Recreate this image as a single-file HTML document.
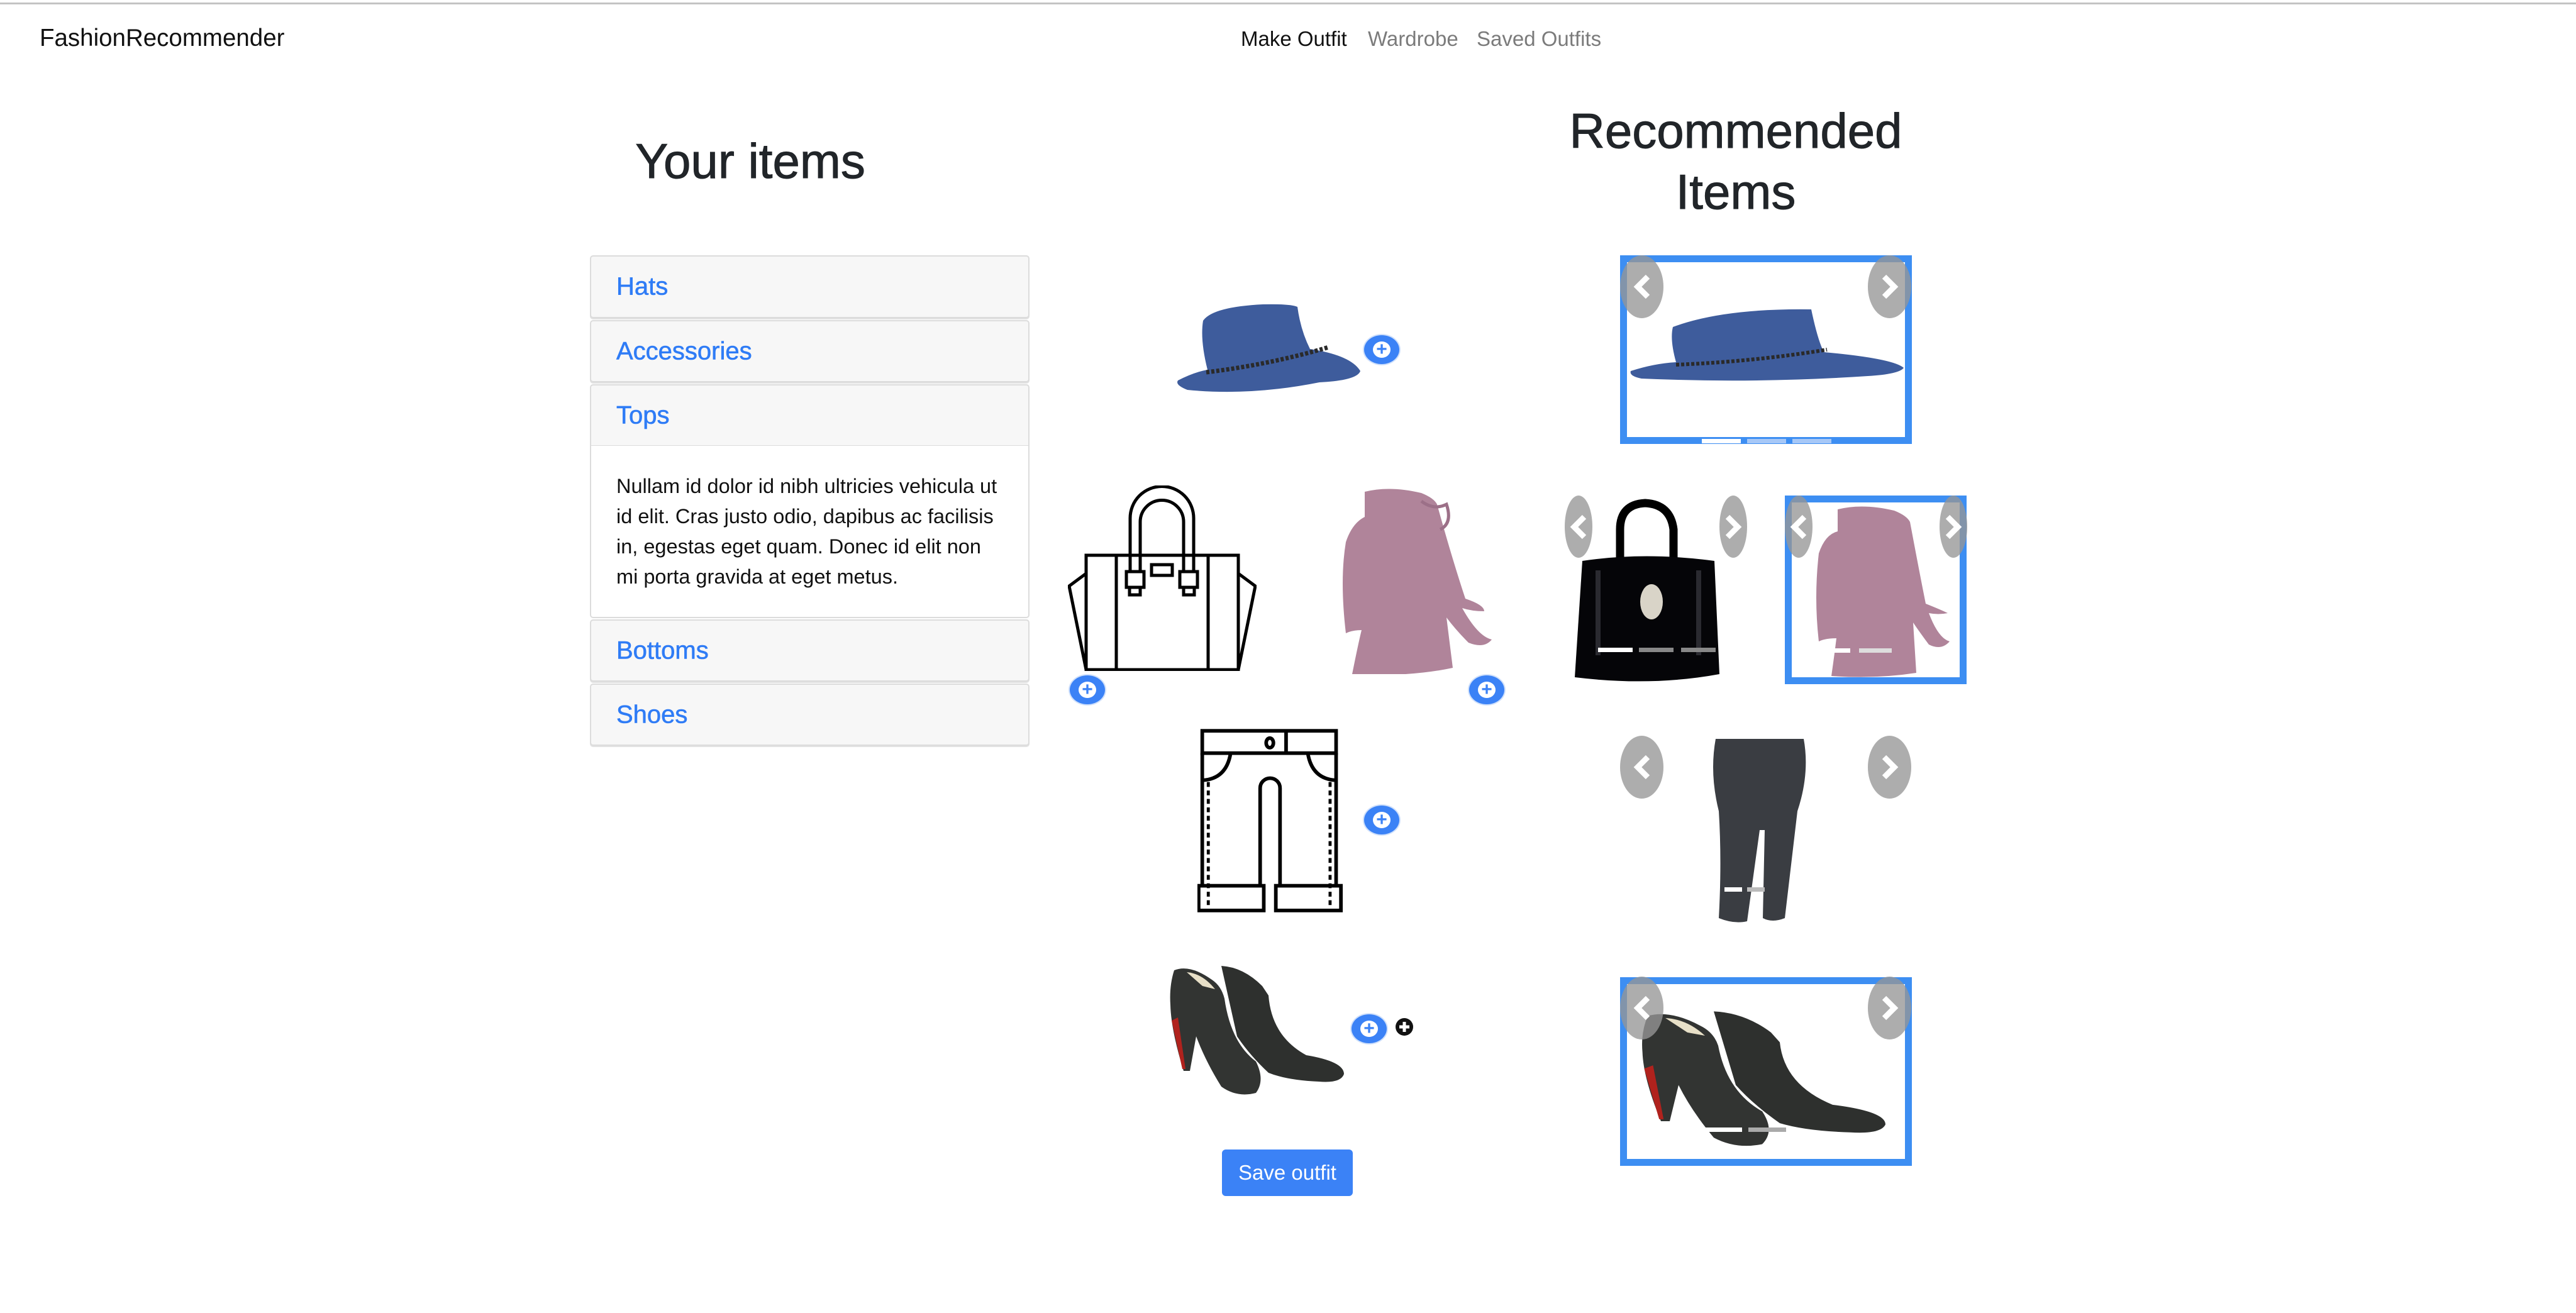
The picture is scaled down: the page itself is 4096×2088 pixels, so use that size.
<!DOCTYPE html>
<html><head><meta charset="utf-8">
<style>
*{box-sizing:border-box;margin:0;padding:0}
body{width:4096px;height:2088px;background:#fff;position:relative;overflow:hidden;font-family:"Liberation Sans",sans-serif;color:#212529}
.abs{position:absolute}
.topline{left:0;top:4px;width:4096px;height:3px;background:#c4c4c4}
.brand{left:63px;top:39px;font-size:38.5px;color:#111;white-space:nowrap}
.nav{top:43px;font-size:33px;white-space:nowrap}
h1{position:absolute;font-weight:400;font-size:78px;color:#212529;text-align:center;line-height:96px;-webkit-text-stroke:1px #212529}
.card{position:absolute;left:938px;width:699px;background:#f7f7f7;border:2px solid #dcdcdc;border-radius:5px;box-shadow:0 2px 0 #e2e2e2}
.card span{position:absolute;left:40px;top:50%;transform:translateY(-50%);font-size:40px;color:#2f7cf6;-webkit-text-stroke:0.6px #2f7cf6}
.body{position:absolute;left:938px;width:699px;top:709px;height:274px;background:#fff;border:2px solid #dcdcdc;border-top:none;border-radius:0 0 5px 5px;padding:40px 40px 0 40px;font-size:32.5px;line-height:48px;color:#111}
.plus{position:absolute;width:60px;height:50px;border-radius:50%;background:#3b82f6;border:2px solid #cfe0fb}
.plus::before{content:"";position:absolute;left:50%;top:50%;width:28px;height:26px;margin:-13px 0 0 -14px;border-radius:50%;background:#fff}
.plus::after{content:"+";position:absolute;left:0;right:0;top:50%;transform:translateY(-50%);text-align:center;font:bold 30px/30px "Liberation Sans",sans-serif;color:#3b82f6}
.box{position:absolute;border:11px solid #3d8ef2;background:#fff}
.arr{position:absolute;border-radius:50%;background:rgba(150,150,150,0.78)}
.arr svg{position:absolute;left:50%;top:50%;width:34px;height:40px;margin:-20px 0 0 -17px}
.ind{position:absolute;height:7px;width:62px}
.btn{left:1943px;top:1828px;width:208px;height:74px;background:#3b82f6;border-radius:6px;color:#fff;font-size:33px;text-align:center;line-height:74px}
</style></head><body>
<div class="abs topline"></div>
<div class="abs brand">FashionRecommender</div>
<div class="abs nav" style="left:1973px;color:#111">Make Outfit</div>
<div class="abs nav" style="left:2175px;color:#7b7b7b">Wardrobe</div>
<div class="abs nav" style="left:2348px;color:#7b7b7b">Saved Outfits</div>

<h1 style="left:938px;width:510px;top:208px">Your items</h1>
<h1 style="left:2400px;width:720px;top:160px;line-height:97px">Recommended<br>Items</h1>

<div class="card" style="top:406px;height:100px"><span>Hats</span></div>
<div class="card" style="top:509px;height:99px"><span>Accessories</span></div>
<div class="card" style="top:611px;height:99px;border-radius:5px 5px 0 0;box-shadow:none"><span>Tops</span></div>
<div class="body">Nullam id dolor id nibh ultricies vehicula ut id elit. Cras justo odio, dapibus ac facilisis in, egestas eget quam. Donec id elit non mi porta gravida at eget metus.</div>
<div class="card" style="top:985px;height:99px"><span>Bottoms</span></div>
<div class="card" style="top:1087px;height:99px"><span>Shoes</span></div>

<!-- center hat -->
<svg class="abs" style="left:1868px;top:480px" width="300" height="150" viewBox="0 0 300 150">
<path d="M45 30 Q60 8 140 4 Q185 3 195 8 Q200 45 215 75 Q280 85 295 110 Q290 125 230 128 Q120 150 20 140 Q0 132 5 125 Q30 112 52 108 Q40 60 45 30Z" fill="#3e5c9c"/>
<path d="M50 112 Q150 100 245 72" stroke="#2a2a2a" stroke-width="7" fill="none" stroke-dasharray="5 3"/>
</svg>
<div class="plus" style="left:2167px;top:531px"></div>

<!-- bag icon -->
<svg class="abs" style="left:1698px;top:772px" width="300" height="295" viewBox="0 0 300 295" fill="none" stroke="#000" stroke-width="5">
<rect x="29" y="111" width="242" height="182"/>
<path d="M29 140 L2 160 L29 293 M271 140 L298 160 L271 293"/>
<line x1="77" y1="111" x2="77" y2="293"/><line x1="223" y1="111" x2="223" y2="293"/>
<path d="M99 137 V52 A50.5 50.5 0 0 1 200 52 V137"/>
<path d="M115 137 V58 A34.5 34.5 0 0 1 184 58 V137"/>
<rect x="93" y="137" width="28" height="25" fill="#fff"/><rect x="98" y="162" width="17" height="12" fill="#fff"/>
<rect x="178" y="137" width="28" height="25" fill="#fff"/><rect x="184" y="162" width="17" height="12" fill="#fff"/>
<rect x="133" y="126" width="33" height="17"/>
</svg>
<div class="plus" style="left:1699px;top:1072px"></div>

<!-- top pink -->
<svg class="abs" style="left:2110px;top:772px" width="272" height="300" viewBox="0 0 272 300">
<path d="M60 10 Q100 0 150 12 Q170 20 175 30 Q200 120 220 180 Q250 190 250 200 Q230 200 215 195 Q240 240 262 245 Q250 260 225 250 Q205 230 190 210 L200 290 Q130 305 40 300 Q50 250 55 230 Q40 230 30 235 Q20 150 30 90 Q40 60 60 50Z" fill="#b0849a"/>
<path d="M150 25 Q170 40 190 30 Q200 60 180 70" stroke="#9c7088" stroke-width="5" fill="none"/>
</svg>
<div class="plus" style="left:2334px;top:1072px"></div>

<!-- pants icon -->
<svg class="abs" style="left:1904px;top:1156px" width="232" height="300" viewBox="-8 -2 242 304" fill="none" stroke="#000" stroke-width="6">
<rect x="0" y="0" width="222" height="37"/>
<ellipse cx="112" cy="20" rx="6" ry="8"/><line x1="139" y1="0" x2="139" y2="37"/>
<path d="M0 37 V257 M222 37 V257"/>
<path d="M0 82 Q40 80 47 37 M222 82 Q182 80 175 37"/>
<path d="M96 257 V95 A16.5 16.5 0 0 1 129 95 V257"/>
<rect x="-6" y="257" width="108" height="41"/><rect x="122" y="257" width="108" height="41"/>
<path d="M10 85 V295 M212 85 V295" stroke-dasharray="8 6" stroke-width="5"/>
</svg>
<div class="plus" style="left:2167px;top:1279px"></div>

<!-- shoes -->
<svg class="abs" style="left:1847px;top:1528px" width="300" height="220" viewBox="0 0 300 220">
<path d="M95 8 Q130 10 160 40 L170 55 Q175 120 230 150 Q290 160 290 180 Q285 195 250 192 Q200 190 170 178 Q140 150 120 120 Z" fill="#2e302e"/>
<path d="M20 15 Q45 5 80 30 Q95 40 100 60 Q110 130 150 160 Q165 190 150 210 Q120 218 95 200 Q70 160 55 120 L45 175 L35 175 Q15 110 14 70 Q12 40 20 15 Z" fill="#323432"/>
<path d="M16 95 L33 172 L38 172 L26 90Z" fill="#b0221d"/>
<path d="M40 18 Q65 20 85 45 L65 40 Z" fill="#e8e0c8"/>
</svg>
<div class="plus" style="left:2147px;top:1611px"></div>
<svg class="abs" style="left:2217px;top:1617px" width="32" height="32" viewBox="0 0 32 32"><circle cx="16" cy="16" r="14" fill="#111"/><path d="M16 8V24M8 16H24" stroke="#fff" stroke-width="5"/></svg>

<div class="abs btn">Save outfit</div>

<!-- right: hat carousel -->
<div class="box" style="left:2576px;top:406px;width:464px;height:300px"></div>
<svg class="abs" style="left:2590px;top:480px" width="440" height="140" viewBox="0 0 440 140">
<path d="M70 40 Q150 10 290 12 Q300 60 310 80 Q420 90 437 105 Q430 115 380 118 Q200 130 20 122 Q0 118 3 110 Q40 98 75 96 Q65 60 70 40Z" fill="#3e5c9c"/>
<path d="M75 100 Q200 95 315 76" stroke="#2a2a2a" stroke-width="6" fill="none" stroke-dasharray="5 3"/>
</svg>
<div class="ind" style="left:2706px;top:698px;background:#fff"></div>
<div class="ind" style="left:2778px;top:698px;background:#a7c8f7"></div>
<div class="ind" style="left:2850px;top:698px;background:#a7c8f7"></div>

<!-- bag carousel -->
<svg class="abs" style="left:2496px;top:792px" width="245" height="300" viewBox="0 0 245 300">
<path d="M80 100 V50 Q80 10 120 8 Q160 10 165 50 L165 100" stroke="#000" stroke-width="13" fill="none"/>
<path d="M20 100 Q120 85 230 100 L238 280 Q130 300 8 285 Z" fill="#050508"/>
<ellipse cx="130" cy="165" rx="18" ry="28" fill="#d9d4c8"/>
<path d="M45 115 V250 M205 115 V250" stroke="#2a2a30" stroke-width="8"/>
</svg>
<div class="ind" style="left:2541px;top:1030px;background:#fff;width:55px"></div>
<div class="ind" style="left:2606px;top:1030px;background:#888;width:55px"></div>
<div class="ind" style="left:2673px;top:1030px;background:#888;width:55px"></div>

<!-- top carousel -->
<div class="box" style="left:2838px;top:788px;width:289px;height:300px"></div>
<svg class="abs" style="left:2862px;top:800px" width="240" height="280" viewBox="0 0 240 280">
<path d="M60 10 Q100 0 150 12 Q170 20 175 30 Q190 110 200 160 Q225 170 235 175 Q220 178 205 175 Q220 215 238 220 Q225 235 205 225 Q190 205 180 190 L185 270 Q120 280 50 275 Q55 240 58 215 Q40 215 30 220 Q22 150 30 80 Q40 50 60 45Z" fill="#b0849a"/>
</svg>
<div class="ind" style="left:2890px;top:1031px;background:#fff;width:52px"></div>
<div class="ind" style="left:2956px;top:1031px;background:#ddd;width:52px"></div>

<!-- jeans -->
<svg class="abs" style="left:2718px;top:1170px" width="170" height="300" viewBox="0 0 170 300">
<path d="M10 5 L150 5 Q160 60 140 120 L120 290 Q100 298 85 290 L88 150 L80 150 L60 295 Q40 300 15 290 Q20 200 15 120 Q0 60 10 5Z" fill="#3a3d42"/>
</svg>
<div class="ind" style="left:2742px;top:1411px;background:#fff;width:28px"></div>
<div class="ind" style="left:2778px;top:1411px;background:#bbb;width:28px"></div>

<!-- shoes carousel -->
<div class="box" style="left:2576px;top:1554px;width:464px;height:300px"></div>
<svg class="abs" style="left:2592px;top:1600px" width="420" height="230" viewBox="0 0 300 220" preserveAspectRatio="none">
<path d="M95 8 Q130 10 160 40 L170 55 Q175 120 230 150 Q290 160 290 180 Q285 195 250 192 Q200 190 170 178 Q140 150 120 120 Z" fill="#2e302e"/>
<path d="M20 15 Q45 5 80 30 Q95 40 100 60 Q110 130 150 160 Q165 190 150 210 Q120 218 95 200 Q70 160 55 120 L45 175 L35 175 Q15 110 14 70 Q12 40 20 15 Z" fill="#323432"/>
<path d="M16 95 L33 172 L38 172 L26 90Z" fill="#b0221d"/>
<path d="M40 18 Q65 20 85 45 L65 40 Z" fill="#e8e0c8"/>
</svg>
<div class="ind" style="left:2710px;top:1793px;background:#fff;width:60px"></div>
<div class="ind" style="left:2780px;top:1793px;background:#aaa;width:60px"></div>

<!-- arrows -->
<div class="arr" style="left:2576px;top:406px;width:69px;height:100px"><svg viewBox="0 0 34 40"><path d="M26 4 L10 20 L26 36" stroke="#fff" stroke-width="9" fill="none"/></svg></div>
<div class="arr" style="left:2970px;top:406px;width:69px;height:100px"><svg viewBox="0 0 34 40"><path d="M8 4 L24 20 L8 36" stroke="#fff" stroke-width="9" fill="none"/></svg></div>
<div class="arr" style="left:2488px;top:788px;width:44px;height:99px"><svg viewBox="0 0 34 40"><path d="M26 4 L10 20 L26 36" stroke="#fff" stroke-width="9" fill="none"/></svg></div>
<div class="arr" style="left:2734px;top:788px;width:44px;height:99px"><svg viewBox="0 0 34 40"><path d="M8 4 L24 20 L8 36" stroke="#fff" stroke-width="9" fill="none"/></svg></div>
<div class="arr" style="left:2838px;top:788px;width:44px;height:99px"><svg viewBox="0 0 34 40"><path d="M26 4 L10 20 L26 36" stroke="#fff" stroke-width="9" fill="none"/></svg></div>
<div class="arr" style="left:3084px;top:788px;width:44px;height:99px"><svg viewBox="0 0 34 40"><path d="M8 4 L24 20 L8 36" stroke="#fff" stroke-width="9" fill="none"/></svg></div>
<div class="arr" style="left:2576px;top:1170px;width:69px;height:100px"><svg viewBox="0 0 34 40"><path d="M26 4 L10 20 L26 36" stroke="#fff" stroke-width="9" fill="none"/></svg></div>
<div class="arr" style="left:2970px;top:1170px;width:69px;height:100px"><svg viewBox="0 0 34 40"><path d="M8 4 L24 20 L8 36" stroke="#fff" stroke-width="9" fill="none"/></svg></div>
<div class="arr" style="left:2576px;top:1553px;width:69px;height:100px"><svg viewBox="0 0 34 40"><path d="M26 4 L10 20 L26 36" stroke="#fff" stroke-width="9" fill="none"/></svg></div>
<div class="arr" style="left:2970px;top:1553px;width:69px;height:100px"><svg viewBox="0 0 34 40"><path d="M8 4 L24 20 L8 36" stroke="#fff" stroke-width="9" fill="none"/></svg></div>
</body></html>
